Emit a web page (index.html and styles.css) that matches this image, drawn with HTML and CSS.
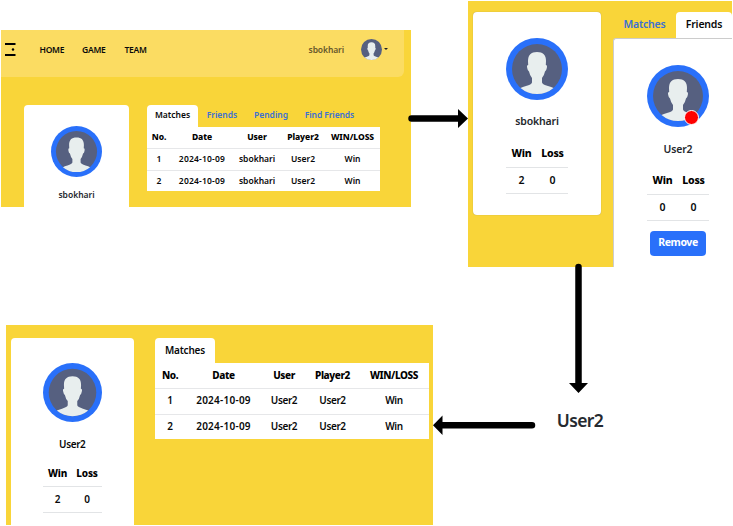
FILE: index.html
```html
<!DOCTYPE html>
<html lang="en">
<head>
<meta charset="utf-8">
<title>Profile flow</title>
<link rel="stylesheet" href="styles.css">
</head>
<body>
<svg width="0" height="0" class="defs" aria-hidden="true">
  <symbol id="person" viewBox="0 0 62 62">
    <circle cx="31" cy="31" r="25" fill="#566080"/>
    <path d="M31 14C25 14 22 17 22 23L22.2 27Q20.500 27 21.200 30Q21.700 33 23 33.500Q24 38 26 40L26 44.500Q25.500 46.500 20 48Q16.500 49 14.500 50Q21.500 56 31 56Q40.500 56 47.500 50Q45.500 49 42 48Q36.500 46.500 36 44.500L36 40Q38 38 39 33.500Q40.300 33 40.800 30Q41.500 27 39.800 27L40 23C40 17 37 14 31 14Z" fill="#e8eeee"/>
  </symbol>
</svg>
<main class="canvas">
  <section class="panel home">
    <header class="navbar">
      <svg class="logo" viewBox="0 0 11 14"><path d="M0 2H10.500M0 13H10.500" stroke="#000" stroke-width="2"/><circle cx="8" cy="7.500" r="1.200"/></svg>
      <nav><a>HOME</a><a>GAME</a><a>TEAM</a></nav>
      <span class="account">sbokhari</span>
      <svg class="mini" viewBox="6 6 50 50"><use href="#person" width="62" height="62"/></svg>
      <i class="caret"></i>
    </header>
    <div class="body">
      <article class="card">
        <svg class="avatar" viewBox="0 0 62 62"><circle cx="31" cy="31" r="31" fill="#2970fa"/><use href="#person" width="62" height="62"/></svg>
        <div class="name">sbokhari</div>
      </article>
      <div class="main">
        <div class="tabs"><a class="active">Matches</a><a>Friends</a><a>Pending</a><a>Find Friends</a></div>
        <div class="grid">
          <div class="row head"><span>No.</span><span>Date</span><span>User</span><span>Player2</span><span>WIN/LOSS</span></div>
          <div class="row"><span>1</span><span class="date">2024-10-09</span><span>sbokhari</span><span>User2</span><span>Win</span></div>
          <div class="row"><span>2</span><span class="date">2024-10-09</span><span>sbokhari</span><span>User2</span><span>Win</span></div>
        </div>
      </div>
    </div>
  </section>

  <section class="panel friends">
    <article class="card">
      <svg class="avatar" viewBox="0 0 62 62"><circle cx="31" cy="31" r="31" fill="#2970fa"/><use href="#person" width="62" height="62"/></svg>
      <div class="name">sbokhari</div>
      <div class="stats"><b>Win</b><b>Loss</b><span>2</span><span>0</span></div>
    </article>
    <div class="main">
      <div class="tabs"><a>Matches</a><a class="active">Friends</a></div>
      <article class="friend">
        <div class="photo">
          <svg class="avatar" viewBox="0 0 62 62"><circle cx="31" cy="31" r="31" fill="#2970fa"/><use href="#person" width="62" height="62"/></svg>
          <i class="status"></i>
        </div>
        <div class="name">User2</div>
        <div class="stats"><b>Win</b><b>Loss</b><span>0</span><span>0</span></div>
        <button>Remove</button>
      </article>
    </div>
  </section>

  <section class="panel profile">
    <article class="card">
      <svg class="avatar" viewBox="0 0 62 62"><circle cx="31" cy="31" r="31" fill="#2970fa"/><use href="#person" width="62" height="62"/></svg>
      <div class="name">User2</div>
      <div class="stats"><b>Win</b><b>Loss</b><span>2</span><span>0</span></div>
    </article>
    <div class="main">
      <div class="tabs"><a class="active">Matches</a></div>
      <div class="grid">
        <div class="row head"><span>No.</span><span>Date</span><span>User</span><span>Player2</span><span>WIN/LOSS</span></div>
        <div class="row"><span>1</span><span class="date">2024-10-09</span><span>User2</span><span>User2</span><span>Win</span></div>
        <div class="row"><span>2</span><span class="date">2024-10-09</span><span>User2</span><span>User2</span><span>Win</span></div>
      </div>
    </div>
  </section>

  <div class="target">User2</div>
  <svg class="arrows" viewBox="0 0 733 526">
    <g stroke="#000" stroke-width="6.500" stroke-linecap="round"><path d="M411.500 118.500H460M578.500 267V385M532 425.300H441"/></g>
    <path d="M458 109L468 118.500L458 128ZM569 383H588L578.500 393ZM442.500 415.500L433 425.300L442.500 435Z"/>
  </svg>
</main>
</body>
</html>
```

FILE: styles.css
```css
* { box-sizing: border-box; }
body { margin: 0; background: #fff; font-family: "Noto Sans", "Open Sans", sans-serif; font-weight: 600; color: #08090a; }
.defs { position: absolute; }
.canvas { position: relative; width: 733px; height: 526px; overflow: hidden; }
.panel { position: absolute; background: #f9d539; overflow: hidden; }
.card { background: #fff; border-radius: 4px; display: flex; flex-direction: column; align-items: center; }
.avatar { display: block; flex: none; }
.name { color: #24282d; white-space: nowrap; }
.tabs { display: flex; }
.tabs a { color: #3b70d3; text-align: center; white-space: nowrap; }
.tabs .active { color: #08090a; background: #fff; border-radius: 4px 4px 0 0; }
.grid { background: #fff; }
.row { display: grid; text-align: center; white-space: nowrap; }
.row + .row { border-top: 1px solid #e6e7e9; }
.head, .stats b { font-weight: 800; color: #000; }
.stats { display: grid; grid-template-columns: 1fr 1fr; text-align: center; }
.stats > * { border-bottom: 1px solid #e2e4e6; }

.home { left: 1px; top: 30px; width: 410px; height: 177px; font-size: 8.5px; }
.home .date { letter-spacing: .2px; }
.navbar { height: 47px; width: 403px; background: #fbdc62; border-radius: 0 0 6px 0; display: flex; align-items: center; padding: 0 16px 9px 4px; }
.logo { width: 11px; height: 14px; }
nav { display: flex; gap: 18px; margin-left: 23.5px; letter-spacing: -.25px; }
nav a { width: 24.5px; white-space: nowrap; }
.account { margin-left: auto; color: #67572b; letter-spacing: -.1px; }
.mini { width: 21px; height: 21px; margin-left: 17px; }
.caret { border: 2.5px solid transparent; border-top-color: #222; border-bottom: 0; margin-left: 2px; }
.body { display: flex; gap: 18px; padding: 28px 0 0 23px; }
.home .card { width: 105px; height: 110px; padding-top: 21px; }
.home .avatar { width: 51px; height: 51px; }
.home .name { line-height: 12px; margin-top: 12px; }
.home .tabs { height: 22px; line-height: 20px; }
.home .tabs a { width: 48px; }
.home .tabs a:nth-child(1) { width: 51px; }
.home .tabs a:nth-child(3) { width: 50px; }
.home .tabs a:nth-child(4) { width: 67px; letter-spacing: -.1px; }
.home .row { grid-template-columns: 24px 62px 48px 44px 55px; height: 21.5px; line-height: 19px; }
.home .head { height: 21px; line-height: 20px; letter-spacing: -.05px; }

.friends { left: 468px; top: 1px; width: 264px; height: 266px; font-size: 10.5px; display: flex; gap: 12px; padding: 11px 0 0 5px; }
.friends .card { width: 128px; height: 203px; padding-top: 26px; box-shadow: 0 0 1px #998b55; }
.friends .avatar { width: 62px; height: 62px; }
.friends .name { line-height: 16px; margin-top: 13px; letter-spacing: -.15px; }
.friends .stats { width: 62px; grid-template-rows: 27px 26px; line-height: 24px; margin-top: 12px; }
.friends .stats b { letter-spacing: -.2px; }
.friends .main { flex: 1; }
.friends .tabs { height: 26px; line-height: 24px; letter-spacing: -.2px; }
.friends .tabs a:first-child { width: 63px; }
.friends .tabs .active { width: 56px; }
.friend { background: #fff; height: 229px; padding: 26px 0 0 33px; border-top: 1px solid #ccc; border-left: 1px solid #ccc; border-radius: 3px 0 0; }
.photo { position: relative; width: 62px; }
.status { position: absolute; left: 37px; top: 45px; width: 15px; height: 15px; border: 1px solid #fff; border-radius: 50%; background: #fe0000; }
.friend .name { width: 62px; margin-top: 14px; text-align: center; }
.friend button { display: block; width: 56px; height: 24.5px; margin: 10px 0 0 3px; padding: 0 0 2px; border: 0; border-radius: 4px; background: #2970fa; color: #fff; font: inherit; font-weight: 700; letter-spacing: -.4px; }
.friend .stats { margin-top: 11px; }

.profile { left: 6px; top: 325px; width: 427px; height: 200px; font-size: 10px; display: flex; gap: 21.5px; padding: 13px 0 0 5px; }
.profile .date { letter-spacing: .25px; }
.profile .card { width: 122.5px; height: 200px; padding-top: 25px; }
.profile .avatar { width: 59px; height: 59px; }
.profile .name { color: #08090a; line-height: 16px; margin-top: 14px; letter-spacing: -.4px; }
.profile .stats { width: 59px; grid-template-rows: 26px 26px; line-height: 25px; margin-top: 9px; }
.profile .stats b { letter-spacing: -.2px; }
.profile .tabs { height: 25px; line-height: 24px; letter-spacing: -.2px; }
.profile .tabs a { width: 60px; }
.profile .row { grid-template-columns: 30px 77px 44px 53px 70px; height: 25.5px; line-height: 23px; letter-spacing: -.4px; }
.profile .head { height: 25px; line-height: 25px; }

.target { position: absolute; left: 550px; top: 408px; width: 60px; text-align: center; font-size: 17.5px; letter-spacing: -.6px; line-height: 24px; color: #252a30; }
.arrows { position: absolute; left: 0; top: 0; width: 733px; height: 526px; }
```
